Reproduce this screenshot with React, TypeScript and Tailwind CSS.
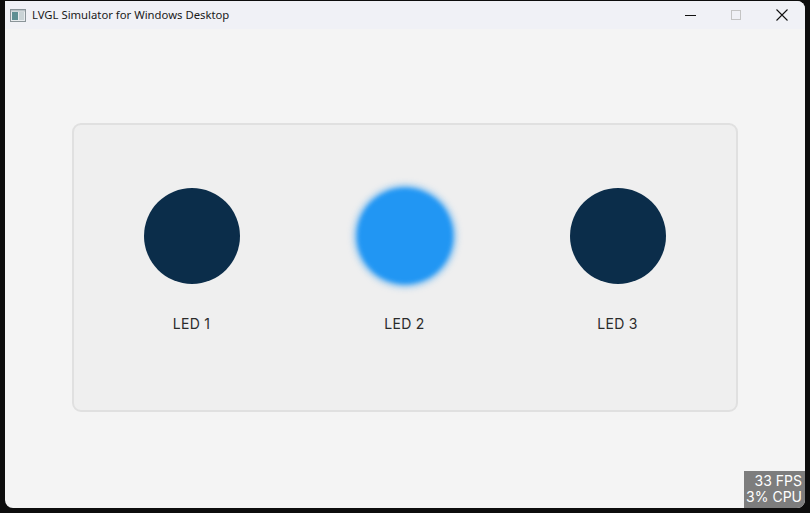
const leds = [
  { name: "LED 1", on: false },
  { name: "LED 2", on: true },
  { name: "LED 3", on: false },
];

const WindowIcon = () => (
  <svg width="16" height="13" viewBox="0 0 16 13">
    <rect x="0.5" y="0.5" width="15" height="12" fill="#e8ecef" stroke="#8a9499" />
    <rect x="2" y="3" width="6" height="8" fill="#5f8f93" />
    <rect x="9" y="3" width="5" height="8" fill="#c9d3d6" />
    <rect x="1" y="1" width="14" height="1.5" fill="#b8c2c6" />
  </svg>
);

const Led = ({ name, on }: { name: string; on: boolean }) => (
  <div className="flex flex-col items-center w-24">
    <div
      className={
        on
          ? "w-24 h-24 rounded-full bg-[#2196f3] blur-[2px] shadow-[0_0_5px_3px_rgba(33,150,243,0.55)]"
          : "w-24 h-24 rounded-full bg-[#0b2d4a]"
      }
    />
    <div className="mt-[32px] text-[14px] leading-[16px] text-[#2b2b2b] whitespace-nowrap font-['Inter',sans-serif] tracking-[0.3px]">
      {name}
    </div>
  </div>
);

export default function App() {
  return (
    <div className="w-[810px] h-[513px] bg-[#0d0d0d] pt-px pl-[5px] overflow-hidden">
      <div className="w-[800px] h-[507px] rounded-tr-[8px] rounded-b-[8px] overflow-hidden flex flex-col bg-[#f4f4f4]">
        {/* Title bar */}
        <div className="h-[28px] shrink-0 bg-[#f0f1f6] flex items-center">
          <div className="pl-[5px] pr-[6px] pt-px">
            <WindowIcon />
          </div>
          <span className="text-[11.3px] text-[#1a1a1a] font-['Noto_Sans',sans-serif]">
            LVGL Simulator for Windows Desktop
          </span>
          <div className="ml-auto flex items-center h-full">
            <div className="w-[46px] h-full flex items-center justify-center">
              <div className="w-[11px] h-px bg-[#111]" />
            </div>
            <div className="w-[46px] h-full flex items-center justify-center">
              <div className="w-[10px] h-[10px] border border-[#c4c4c4]" />
            </div>
            <div className="w-[46px] h-full flex items-center justify-center">
              <svg width="12" height="12" viewBox="0 0 12 12">
                <path d="M0.5 0.5 L11.5 11.5 M11.5 0.5 L0.5 11.5" stroke="#111" strokeWidth="1.1" />
              </svg>
            </div>
          </div>
        </div>

        {/* Content */}
        <div className="relative flex-1 flex items-center justify-center">
          <div className="w-[666px] h-[289px] border-2 border-[#e0e0e0] rounded-[9px] bg-[#efefef] flex justify-between px-[70px] pt-[63px] -mt-[2px] -ml-px">
            {leds.map((led) => (
              <Led key={led.name} name={led.name} on={led.on} />
            ))}
          </div>
          <div className="absolute right-0 bottom-0 w-[61px] h-[37px] bg-[#7d7d7d] text-white text-right pr-[3px] text-[14px] leading-[16px] pt-[2px] font-['Inter',sans-serif]">
            <div>33 FPS</div>
            <div>3% CPU</div>
          </div>
        </div>
      </div>
    </div>
  );
}
